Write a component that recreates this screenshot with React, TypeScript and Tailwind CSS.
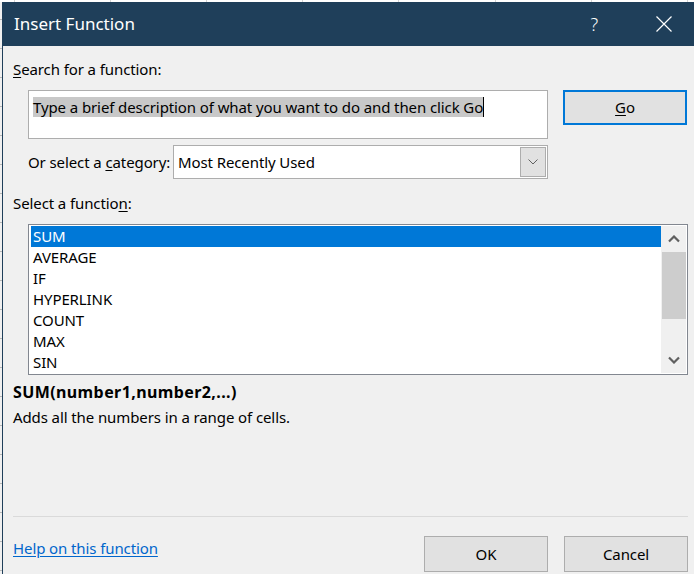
import React from 'react';

const functions = ['SUM', 'AVERAGE', 'IF', 'HYPERLINK', 'COUNT', 'MAX', 'SIN'];
const columns = [15, 96, 96, 96, 96, 97, 96, 96];
const rows = [18, 29, 29, 29, 29, 29, 29, 29, 29, 29, 29, 29, 29, 29, 29, 29, 29, 29, 29, 29];

function Chevron({ down }: { down?: boolean }) {
  return (
    <svg width="12" height="8" viewBox="0 0 12 8" className="block">
      <path
        d={down ? 'M1 1.5 L6 6.5 L11 1.5' : 'M1 6.5 L6 1.5 L11 6.5'}
        fill="none"
        stroke="#606060"
        strokeWidth="2.2"
      />
    </svg>
  );
}

export default function App() {
  return (
    <div className="flex h-[574px] w-[694px] flex-col overflow-hidden bg-white font-['Noto_Sans',sans-serif] text-[15px] tracking-[-0.1px] text-black">
      <div className="flex h-[2px] shrink-0">
        {columns.map((w, i) => (
          <div key={i} className="h-full shrink-0 border-r border-[#d4d4d4]" style={{ width: w }} />
        ))}
      </div>
      <div className="flex flex-1">
        <div className="flex w-[2px] shrink-0 flex-col bg-[#f0f0f0]">
          {rows.map((h, i) => (
            <div key={i} className="w-full shrink-0 border-b border-[#b8b8b8]" style={{ height: h }} />
          ))}
        </div>
        <div className="flex flex-1 flex-col border-l border-[#1f3f5a] bg-[#f0f0f0]">
          <div className="flex h-[44px] shrink-0 items-center bg-[#1f3f5a] pl-[11px] text-white">
            <span className="text-[17px] tracking-normal">Insert Function</span>
            <span className="ml-auto mr-[58px] text-[18px] font-light">?</span>
            <svg width="16" height="16" viewBox="0 0 16 16" className="mr-[23px]">
              <path d="M0.5 0.5 L15.5 15.5 M15.5 0.5 L0.5 15.5" stroke="white" strokeWidth="1.2" />
            </svg>
          </div>

          <div className="flex flex-col pl-[10px] pr-[7px]">
            <div className="mt-[13px] h-5 leading-5">
              <span className="underline underline-offset-2">S</span>earch for a function:
            </div>

            <div className="mt-[11px] flex items-start">
              <div className="ml-[15px] h-[49px] w-[520px] border border-[#adadad] bg-white px-1 pt-[2px]">
                <span className="bg-[#c8c8c8] leading-5">
                  Type a brief description of what you want to do and then click Go
                </span>
                <span className="inline-block h-5 w-px translate-y-[4px] bg-black" />
              </div>
              <button className="ml-[15px] h-[35px] w-[124px] border-2 border-[#0078d7] bg-[#e1e1e1]">
                <span className="underline underline-offset-2">G</span>o
              </button>
            </div>

            <div className="mt-[6px] flex h-[34px] items-center">
              <span className="ml-[15px] w-[145px] shrink-0 whitespace-nowrap">
                Or select a <span className="underline underline-offset-2">c</span>ategory:
              </span>
              <div className="flex h-[34px] w-[375px] items-center border border-[#adadad] bg-white pl-[4px] pr-px">
                <span>Most Recently Used</span>
                <div className="ml-auto flex h-[30px] w-[26px] items-center justify-center border border-[#adadad] bg-[#e1e1e1]">
                  <svg width="10" height="6" viewBox="0 0 10 6">
                    <path d="M0.5 0.5 L5 5 L9.5 0.5" fill="none" stroke="#606060" strokeWidth="1" />
                  </svg>
                </div>
              </div>
            </div>

            <div className="mt-[14px] h-5 leading-5">
              Select a functio<span className="underline underline-offset-2">n</span>:
            </div>

            <div className="ml-[15px] mt-[11px] flex h-[151px] w-[660px] border border-[#828790] bg-white p-px">
              <div className="flex flex-1 flex-col pl-px">
                {functions.map((f, i) => (
                  <div
                    key={f}
                    className={`h-[21px] pl-[2px] leading-[21px] ${i === 0 ? 'bg-[#0078d7] text-white' : ''}`}
                  >
                    {f}
                  </div>
                ))}
              </div>
              <div className="flex w-[25px] flex-col items-center bg-[#f0f0f0]">
                <div className="flex h-[26px] items-center justify-center">
                  <Chevron />
                </div>
                <div className="h-[67px] w-[24px] bg-[#cdcdcd]" />
                <div className="flex-1" />
                <div className="flex h-[26px] items-center justify-center">
                  <Chevron down />
                </div>
              </div>
            </div>

            <div className="mt-[7px] h-5 text-[16px] font-bold leading-5 tracking-[0.4px]">
              SUM(number1,number2,...)
            </div>
            <div className="mt-[5px] h-5 leading-5">Adds all the numbers in a range of cells.</div>

            <div className="mt-[89px] h-px bg-[#dadada]" />

            <div className="mt-[19px] flex h-[36px] items-start">
              <a className="mt-px text-[#0066cc] underline underline-offset-2">Help on this function</a>
              <button className="ml-auto h-[36px] w-[124px] border border-[#adadad] bg-[#e1e1e1]">OK</button>
              <button className="ml-[16px] h-[36px] w-[124px] border border-[#adadad] bg-[#e1e1e1]">Cancel</button>
            </div>
          </div>
        </div>
      </div>
    </div>
  );
}
